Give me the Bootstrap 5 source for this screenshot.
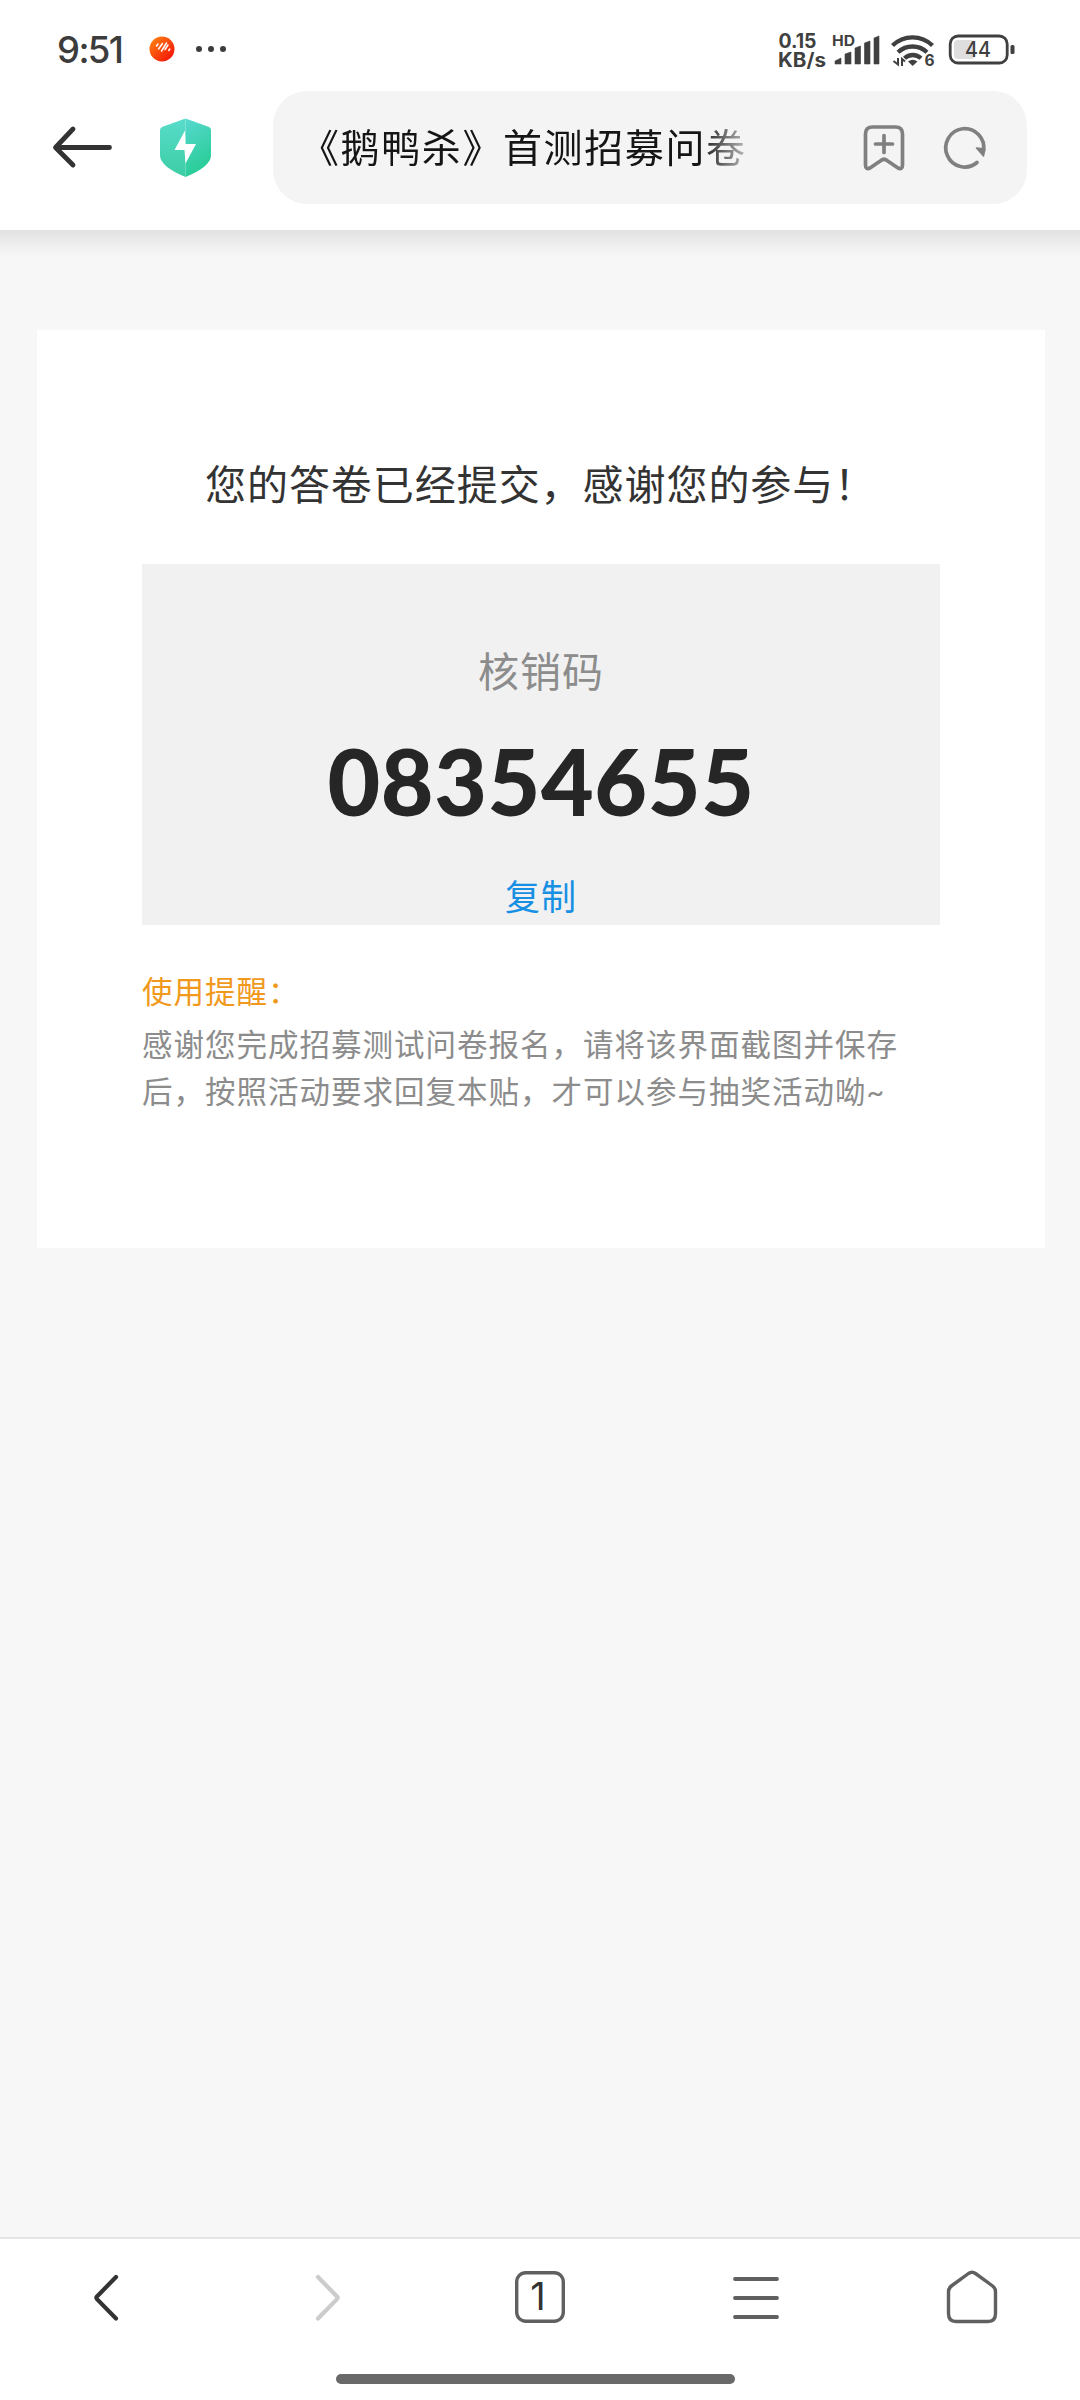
<!DOCTYPE html>
<html lang="zh-CN">
<head>
<meta charset="utf-8">
<meta name="viewport" content="width=device-width, initial-scale=1">
<title>《鹅鸭杀》首测招募问卷</title>
<link href="https://cdn.jsdelivr.net/npm/bootstrap@5.3.0/dist/css/bootstrap.min.css" rel="stylesheet">
<style>
body{font-family:Lato,"Noto Sans CJK SC",sans-serif;background:#f7f7f7;color:#333;width:1080px;height:2400px;overflow:hidden}
svg{display:block;flex:none}
.top-area{height:230px}
.status-row{height:91px;padding:0 64px 0 57px}
.clock{font-family:Inter,sans-serif;font-size:36.5px;line-height:40px;letter-spacing:-1.6px;font-weight:500;color:#3c3c3c;width:91px;margin-top:30px;white-space:nowrap}
.notif{margin-top:33px}
.status-icons{margin-top:27px}
.tool-row{padding:0 53px 0 48px;height:113px}
.address{width:754px;height:113px;border-radius:34px;background:#f4f4f4;padding:0 38px 0 27px}
.page-name{font-size:39px;letter-spacing:1.6px;line-height:56px;width:448px;white-space:nowrap;background:linear-gradient(90deg,#151515 0 400px,#b8b8b8 446px);-webkit-background-clip:text;background-clip:text;color:transparent;margin-top:-2px}
.fade-edge{height:26px;background:linear-gradient(#e1e1e1,#ededed 50%,#f7f7f7)}
.result{width:1008px;height:918px;margin:74px 0 0 37px;padding:125px 105px 0;background:#fff}
.thanks{font-size:41px;letter-spacing:.95px;line-height:60px;margin:0 0 49px;padding-left:63px;font-weight:400;white-space:nowrap}
.code-box{height:361px;background:#f1f1f1;padding-top:78px;margin-bottom:43px}
.code-label{font-size:41px;letter-spacing:1px;line-height:60px;color:#8c8c8c}
.code-num{font-size:91px;font-weight:900;line-height:100px;letter-spacing:.6px;color:#262626;margin-top:29px}
.copy-link{font-size:35px;letter-spacing:1px;line-height:50px;color:#1790e4;margin-top:40px;text-decoration:none}
.tip-head{font-size:30.5px;letter-spacing:1px;line-height:47px;color:#f0991c;margin-bottom:6px}
.tip-body{font-size:30.5px;letter-spacing:1px;line-height:47px;color:#8c8c8c;white-space:nowrap}
.bottom-area{height:163px;border-top:2px solid #e5e5e5}
.nav-row{height:117px}
.home-bar{width:399px;height:10px;border-radius:5px;background:#696969;margin:18px 0 0 336px}
</style>
</head>
<body class="d-flex flex-column">
<header class="top-area bg-white flex-shrink-0">
  <div class="status-row d-flex align-items-start">
    <div class="clock">9:51</div>
    <svg class="notif" width="82" height="32" viewBox="148 33 82 32">
      <defs><linearGradient id="og" x1="0" y1="0" x2="1" y2="1"><stop offset="0" stop-color="#ff8a10"/><stop offset=".55" stop-color="#f9420c"/><stop offset="1" stop-color="#f20505"/></linearGradient></defs>
      <circle cx="162" cy="49" r="12.5" fill="url(#og)"/>
      <path d="M156.500 46l1.500-2M158.500 49l4-5.500M161.500 51l5-8M165 49.500l3-4.500M168.800 50.500l1-1.500" stroke="#fff" stroke-width="1.500" stroke-linecap="round"/>
      <g fill="#3c3c3c"><circle cx="199" cy="49" r="3"/><circle cx="211" cy="49" r="3"/><circle cx="223" cy="49" r="3"/></g>
    </svg>
    <svg class="status-icons ms-auto" width="240" height="46" viewBox="776 27 240 46" fill="#404040" font-family="Inter,sans-serif" font-weight="700">
      <text x="778.500" y="48" font-size="19.500" textLength="38" lengthAdjust="spacingAndGlyphs">0.15</text>
      <text x="778" y="66.500" font-size="19.500" textLength="48" lengthAdjust="spacingAndGlyphs">KB/s</text>
      <text x="832" y="45.500" font-size="14" textLength="23" lengthAdjust="spacingAndGlyphs">HD</text>
      <path d="M835 64v-3l6-3v6zM845 64V54l6-2v12zM855 64V48l5.500-2v18zM864.500 64V43l5.500-2v23zM874 64V38l5-2v28z" stroke="#404040" stroke-width=".6" stroke-linejoin="round"/>
      <g fill="none" stroke="#404040" stroke-width="4.300"><path d="M892.500 45.500a28.500 28.500 0 0 1 40 0M898 52.300a21 21 0 0 1 29 0M904.500 58.300a12 12 0 0 1 16.500 0"/></g>
      <path d="M908 61.500q4.800-3.500 9.500 0l-4.800 4.500z"/>
      <path d="M898 58v6.500l-4.500-3.500M902 66V59l3 2.500" fill="none" stroke="#404040" stroke-width="2"/>
      <text x="924.500" y="66" font-size="15.500">6</text>
      <rect x="954" y="40" width="21" height="19" rx="4" fill="#dedede"/>
      <rect x="950.200" y="36" width="57" height="27" rx="8" fill="none" stroke="#404040" stroke-width="2.800"/>
      <rect x="1010.500" y="45" width="4" height="9" rx="1.500"/>
      <text x="965" y="57" font-size="21.500" font-weight="500" textLength="26" lengthAdjust="spacingAndGlyphs">44</text>
    </svg>
  </div>
  <div class="tool-row d-flex align-items-center">
    <svg width="70" height="60" viewBox="48 118 70 60" fill="none" stroke="#333" stroke-width="4.800" stroke-linecap="round" stroke-linejoin="round"><path d="M109.500 147.500H56M73 129L55.500 147.500 73 165"/></svg>
    <svg width="106" height="62" viewBox="118 117 106 62">
      <defs><linearGradient id="gl" x1="0" y1="0" x2="0" y2="1"><stop offset="0" stop-color="#58dccb"/><stop offset="1" stop-color="#3bcda4"/></linearGradient><linearGradient id="gr" x1="0" y1="0" x2=".3" y2="1"><stop offset="0" stop-color="#58d9d0"/><stop offset="1" stop-color="#28cc96"/></linearGradient></defs>
      <path d="M185.500 118.500L162 127q-2 1-2 3v26q1 11 25.500 21z" fill="url(#gl)"/>
      <path d="M185.500 118.500L209 127q2 1 2 3v26q-1 11-25.500 21z" fill="url(#gr)"/>
      <path d="M185 130.500L174.500 150H184.500L185.500 163.500 196 144H185.500z" fill="#fff"/>
    </svg>
    <div class="address d-flex align-items-center ms-auto">
      <div class="page-name">《鹅鸭杀》首测招募问卷</div>
      <svg class="ms-auto" width="130" height="60" viewBox="860 118 130 60" fill="none" stroke="#808080" stroke-width="3.700" stroke-linecap="round" stroke-linejoin="round">
        <path d="M866.500 134q0-7 7-7h23q7 0 7 7v31q0 5-4.500 3l-11-7.500q-3-2.500-6 0l-11 7.500q-4.500 2-4.500-3z"/>
        <path d="M885 135.500v17M876.500 144h17"/>
        <path d="M978 162.500A19 19.200 0 1 1 984.500 151"/><path d="M977.500 148l7 8 1.300-7z" fill="#808080" stroke-width="1.500"/>
      </svg>
    </div>
  </div>
</header>
<main class="flex-grow-1">
  <div class="fade-edge"></div>
  <section class="result">
    <h1 class="thanks">您的答卷已经提交，感谢您的参与！</h1>
    <div class="code-box d-flex flex-column align-items-center">
      <div class="code-label">核销码</div>
      <div class="code-num">08354655</div>
      <a class="copy-link" href="#">复制</a>
    </div>
    <div class="tip-head">使用提醒：</div>
    <div class="tip-body">感谢您完成招募测试问卷报名，请将该界面截图并保存<br>后，按照活动要求回复本贴，才可以参与抽奖活动呦~</div>
  </section>
</main>
<footer class="bottom-area bg-white flex-shrink-0">
  <nav class="nav-row d-flex align-items-center justify-content-between">
    <svg width="216" height="80" viewBox="0 2258 216 80" fill="none" stroke="#333" stroke-width="4.200" stroke-linecap="round" stroke-linejoin="round"><path d="M116 2277L97 2296.500q-1.200 1.300 0 2.600L116 2318.500"/></svg>
    <svg width="216" height="80" viewBox="216 2258 216 80" fill="none" stroke="#ccc" stroke-width="4.200" stroke-linecap="round" stroke-linejoin="round"><path d="M318 2277l19 19.500q1.200 1.300 0 2.600L318 2318.500"/></svg>
    <svg width="216" height="80" viewBox="432 2258 216 80"><rect x="516.700" y="2272.700" width="46.600" height="48.600" rx="9" fill="none" stroke="#606060" stroke-width="3.400"/><text x="538" y="2310" text-anchor="middle" font-family="Inter,sans-serif" font-size="38" fill="#333">1</text></svg>
    <svg width="216" height="80" viewBox="648 2258 216 80" fill="none" stroke="#606060" stroke-width="3.800" stroke-linecap="round"><path d="M735 2279h42M735 2298h42M735 2317h42"/></svg>
    <svg width="216" height="80" viewBox="864 2258 216 80" fill="none" stroke="#606060" stroke-width="3.400" stroke-linejoin="round"><path d="M968.500 2273.500q3.500-2.500 7 0l16.500 12q3.500 2.500 3.500 6v22q0 8-7.500 8h-32q-7.500 0-7.500-8v-22q0-3.500 3.500-6z"/></svg>
  </nav>
  <div class="home-bar"></div>
</footer>
<script src="https://cdn.jsdelivr.net/npm/bootstrap@5.3.0/dist/js/bootstrap.bundle.min.js"></script>
</body>
</html>
